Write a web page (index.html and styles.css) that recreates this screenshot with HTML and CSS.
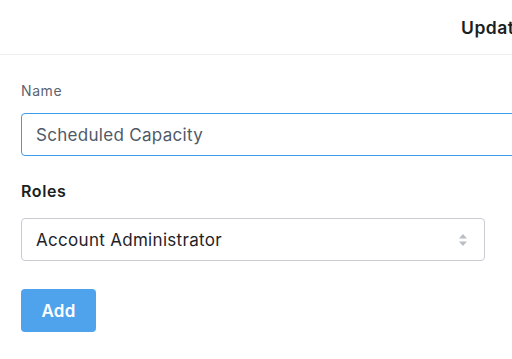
FILE: index.html
```html
<!DOCTYPE html>
<html>
<head>
<meta charset="utf-8">
<link rel="stylesheet" href="styles.css">
</head>
<body>
<div class="page">
  <header class="header">
    <h1 class="title">Update Role</h1>
  </header>
  <form class="form">
    <label class="label">Name</label>
    <input class="input" type="text" value="Scheduled Capacity">
    <h2 class="section">Roles</h2>
    <div class="select">
      <span class="select-text">Account Administrator</span>
      <svg class="arrows" width="8" height="12" viewBox="0 0 8 12">
        <path d="M4 0 L8 4.5 L0 4.5 Z" fill="#b9bdc4"/>
        <path d="M4 12 L8 7.5 L0 7.5 Z" fill="#b9bdc4"/>
      </svg>
    </div>
    <button class="btn" type="button">Add</button>
  </form>
</div>
</body>
</html>
```
FILE: styles.css
```css
html, body {
  margin: 0;
  padding: 0;
  background: #fff;
  overflow: hidden;
}
body {
  font-family: "Inter", "Open Sans", sans-serif;
  color: #1f2328;
}
.page {
  width: 1100px;
}
.header {
  height: 55px;
  border-bottom: 1px solid #eeeff1;
  box-sizing: border-box;
  padding-left: 461px;
  display: flex;
  align-items: center;
}
.title {
  margin: 0;
  font-size: 17.5px;
  font-weight: 600;
  letter-spacing: 0.5px;
  color: #1b1e22;
}
.form {
  padding: 26px 21px 0 21px;
  display: flex;
  flex-direction: column;
  align-items: flex-start;
}
.label {
  font-size: 14px;
  letter-spacing: 0.6px;
  color: #5b6472;
  line-height: 20px;
  margin-bottom: 12px;
}
.input {
  width: 600px;
  height: 43px;
  box-sizing: border-box;
  border: 1px solid #3d9cee;
  border-radius: 4px;
  padding: 0 14px;
  font-family: inherit;
  font-size: 17px;
  letter-spacing: 0.3px;
  color: #4f5a69;
  outline: none;
}
.section {
  margin: 24px 0 0 0;
  font-size: 16px;
  font-weight: 600;
  letter-spacing: 0.6px;
  line-height: 22px;
  color: #1b1e22;
}
.select {
  margin-top: 16px;
  width: 464px;
  height: 43px;
  box-sizing: border-box;
  border: 1px solid #c9cdd3;
  border-radius: 4px;
  padding: 0 17px 0 14px;
  display: flex;
  align-items: center;
  justify-content: space-between;
}
.select-text {
  font-size: 17px;
  letter-spacing: 0.3px;
  color: #1f2328;
}
.arrows {
  display: block;
}
.btn {
  margin-top: 28px;
  width: 75px;
  height: 43px;
  border: none;
  border-radius: 4px;
  background: #4fa3ec;
  color: #fff;
  font-family: inherit;
  font-size: 17px;
  font-weight: 600;
  letter-spacing: 0.3px;
}
```
